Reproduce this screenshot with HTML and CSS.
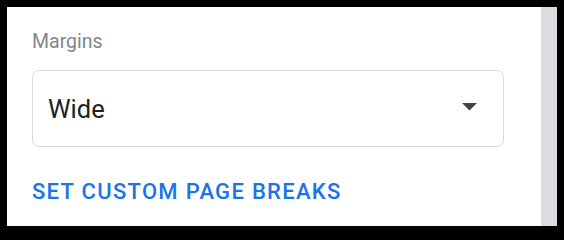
FILE: index.html
```html
<!DOCTYPE html>
<html>
<head>
<meta charset="utf-8">
<link rel="stylesheet" href="styles.css">
</head>
<body>
<div class="frame">
  <div class="panel">
    <div class="label">Margins</div>
    <div class="select">
      <span class="value">Wide</span>
      <svg class="arrow" width="15" height="8" viewBox="0 0 15 8"><polygon points="0,0 15,0 7.5,7.5" fill="#444"/></svg>
    </div>
    <a class="link" href="#">SET CUSTOM PAGE BREAKS</a>
  </div>
  <div class="scrollbar"></div>
</div>
</body>
</html>
```

FILE: styles.css
```css
html, body {
  margin: 0;
  padding: 0;
  background: #000;
}
body {
  padding: 7px 7px 8px 7px;
  font-family: Roboto, "Liberation Sans", sans-serif;
}
.frame {
  display: flex;
  height: 219px;
}
.panel {
  width: 534px;
  background: #fff;
  box-sizing: border-box;
  padding: 23px 37px 0 25px;
  display: flex;
  flex-direction: column;
  align-items: stretch;
}
.scrollbar {
  width: 16px;
  background: #dadce0;
}
.label {
  font-size: 19.5px;
  line-height: 24px;
  color: #80868b;
}
.select {
  margin-top: 16px;
  height: 77px;
  box-sizing: border-box;
  border: 1px solid #dadce0;
  border-radius: 7px;
  display: flex;
  align-items: center;
  justify-content: space-between;
  padding: 0 26px 0 15px;
}
.value {
  font-size: 25.5px;
  color: #202124;
}
.arrow {
  display: block;
  margin-top: -3px;
}
.link {
  align-self: flex-start;
  margin-top: 33px;
  font-size: 22px;
  line-height: 24px;
  font-weight: 500;
  letter-spacing: 1.3px;
  color: #1a73e8;
  text-decoration: none;
}
```
